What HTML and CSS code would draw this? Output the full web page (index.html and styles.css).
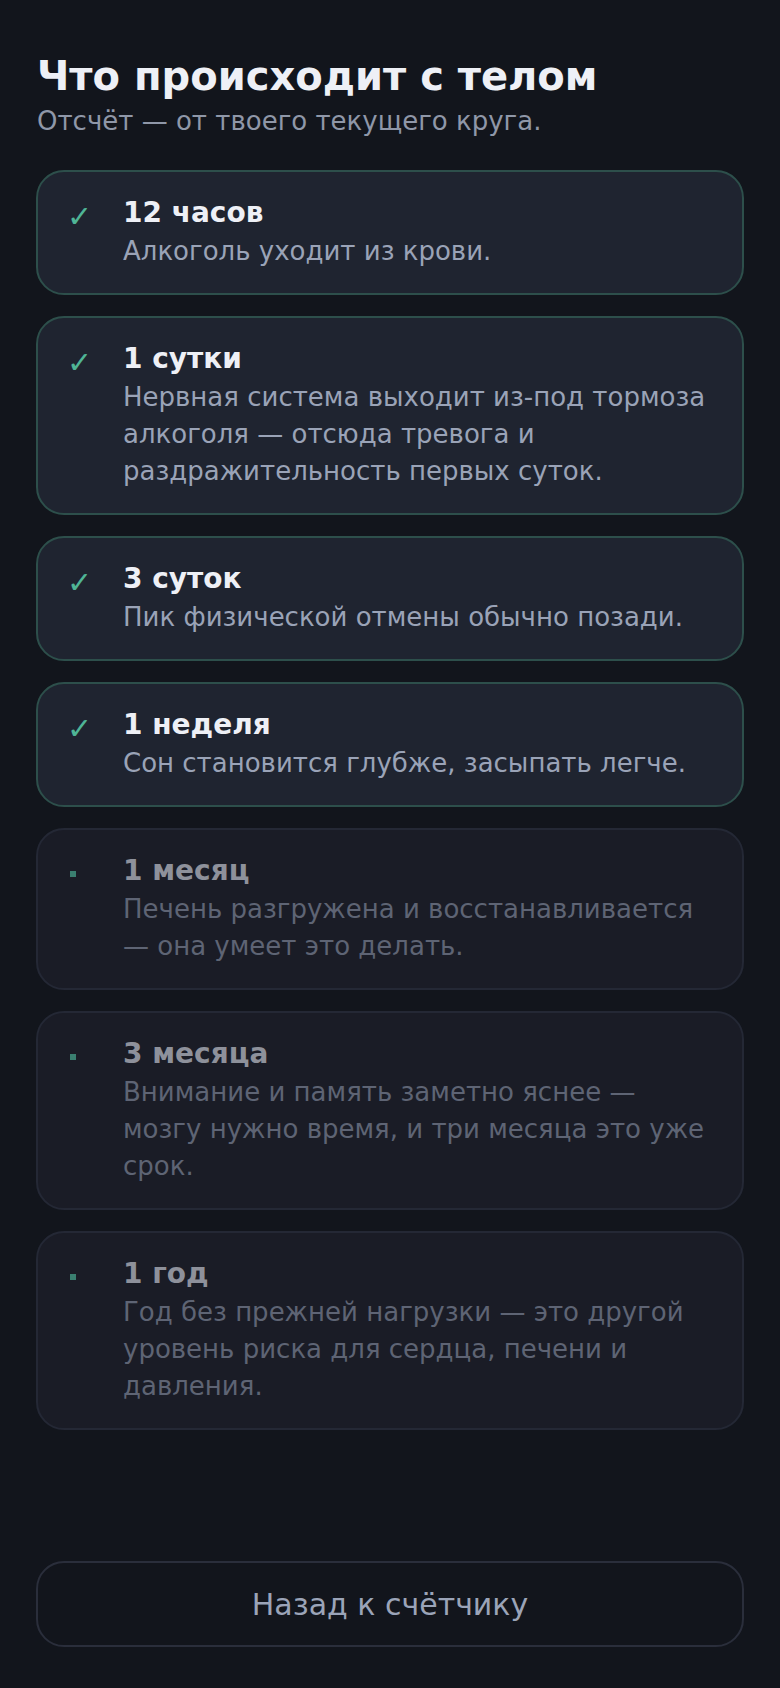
FILE: index.html
```html
<!DOCTYPE html>
<html lang="ru">
<head>
<meta charset="utf-8">
<title>Что происходит с телом</title>
<link rel="stylesheet" href="styles.css">
</head>
<body>
<main class="page">
  <header class="intro">
    <h1 class="title">Что происходит с телом</h1>
    <p class="subtitle">Отсчёт — от твоего текущего круга.</p>
  </header>

  <ul class="milestones">
    <li class="card card-done">
      <span class="mark"><span class="check">✓</span></span>
      <div class="body">
        <h2 class="card-title">12 часов</h2>
        <p class="card-text">Алкоголь уходит из крови.</p>
      </div>
    </li>
    <li class="card card-done">
      <span class="mark"><span class="check">✓</span></span>
      <div class="body">
        <h2 class="card-title">1 сутки</h2>
        <p class="card-text">Нервная система выходит из-под тормоза алкоголя — отсюда тревога и раздражительность первых суток.</p>
      </div>
    </li>
    <li class="card card-done">
      <span class="mark"><span class="check">✓</span></span>
      <div class="body">
        <h2 class="card-title">3 суток</h2>
        <p class="card-text">Пик физической отмены обычно позади.</p>
      </div>
    </li>
    <li class="card card-done">
      <span class="mark"><span class="check">✓</span></span>
      <div class="body">
        <h2 class="card-title">1 неделя</h2>
        <p class="card-text">Сон становится глубже, засыпать легче.</p>
      </div>
    </li>
    <li class="card card-next">
      <span class="mark"><span class="dot"></span></span>
      <div class="body">
        <h2 class="card-title">1 месяц</h2>
        <p class="card-text">Печень разгружена и восстанавливается — она умеет это делать.</p>
      </div>
    </li>
    <li class="card card-next">
      <span class="mark"><span class="dot"></span></span>
      <div class="body">
        <h2 class="card-title">3 месяца</h2>
        <p class="card-text">Внимание и память заметно яснее — мозгу нужно время, и три месяца это уже срок.</p>
      </div>
    </li>
    <li class="card card-next">
      <span class="mark"><span class="dot"></span></span>
      <div class="body">
        <h2 class="card-title">1 год</h2>
        <p class="card-text">Год без прежней нагрузки — это другой уровень риска для сердца, печени и давления.</p>
      </div>
    </li>
  </ul>

  <button class="back" type="button">Назад к счётчику</button>
</main>
</body>
</html>
```

FILE: styles.css
```css
* {
  box-sizing: border-box;
}

html,
body {
  margin: 0;
  padding: 0;
  background: #12151c;
}

body {
  font-family: "DejaVu Sans", "Noto Sans", sans-serif;
  color: #eef0f6;
}

.page {
  min-height: 1688px;
  display: flex;
  flex-direction: column;
  padding: 52px 36px 41px 36px;
}

.intro {
  margin-bottom: 31px;
}

.title {
  margin: 0 0 3px 1px;
  font-size: 40px;
  line-height: 48px;
  font-weight: 700;
  color: #eef0f6;
}

.subtitle {
  margin: 0 0 0 1px;
  font-size: 26px;
  line-height: 36px;
  color: #8f97a8;
}

.milestones {
  list-style: none;
  margin: 0;
  padding: 0;
  display: flex;
  flex-direction: column;
  gap: 21px;
}

.card {
  display: flex;
  align-items: flex-start;
  padding: 23px 32px 23px 31px;
  border-radius: 28px;
  border: 2px solid transparent;
}

.card-done {
  background: #1f2430;
  border-color: #2d4f4b;
}

.card-next {
  background: #1a1c26;
  border-color: #242835;
}

.mark {
  flex: 0 0 54px;
  height: 36px;
  display: flex;
  align-items: center;
  padding-top: 7px;
}

.check {
  font-size: 30px;
  line-height: 1;
  margin-left: -2px;
  color: #4fb596;
}

.dot {
  display: block;
  width: 6px;
  height: 6px;
  margin-left: 1px;
  margin-top: -1px;
  background: #3a7f70;
}

.body {
  flex: 1 1 auto;
  min-width: 0;
}

.card-title {
  margin: 0 0 2px 0;
  font-size: 28px;
  line-height: 36px;
  font-weight: 700;
}

.card-text {
  margin: 0;
  font-size: 26px;
  line-height: 37px;
}

.card-done .card-title {
  color: #eef0f6;
}

.card-done .card-text {
  color: #9aa3b7;
}

.card-next .card-title {
  color: #8e919b;
}

.card-next .card-text {
  color: #5e6474;
}

.back {
  margin-top: auto;
  width: 100%;
  height: 86px;
  border-radius: 28px;
  border: 2px solid #2a2e3b;
  background: transparent;
  color: #9ba4b8;
  font-family: "DejaVu Sans", "Noto Sans", sans-serif;
  font-size: 30px;
  cursor: pointer;
}
```
